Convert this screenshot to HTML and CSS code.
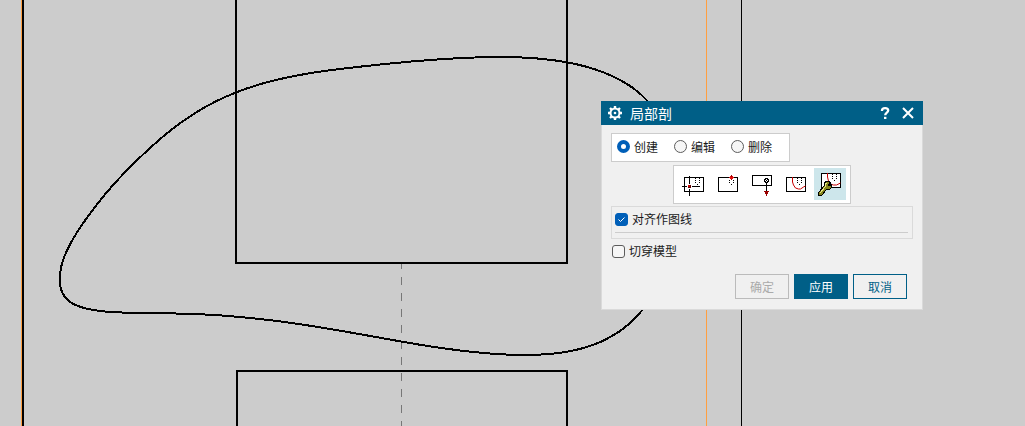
FILE: index.html
```html
<!DOCTYPE html>
<html lang="zh-CN">
<head>
<meta charset="utf-8">
<title>局部剖</title>
<link rel="stylesheet" href="styles.css">
</head>

<body>
<svg class="canvas" aria-hidden="true">
    <rect class="orange" x="21" y="0" width="1" height="100%"/>
    <rect x="22" y="0" width="2" height="100%"/>
    <rect class="orange" x="706" y="0" width="1" height="100%"/>
    <rect x="741" y="0" width="1" height="100%"/>
    <line class="axis" x1="401.5" y1="264" x2="401.5" y2="100%"/>
    <path class="edge" d="M236 0V263H567V0"/>
    <path class="edge" d="M237 2000V371H567V2000"/>
    <path class="spline" d="M60 281C60 275 60 269 62 264C66 248 77 231 90.5 213C108.5 188 131 165 155 143.5C179 122 206 104 236 92.5C268 79.5 302 73.5 340 69C394 62.5 446 57 500 57C523 57 546 58.5 567 62.3C592 67 615 75 633 88C638.5 92 643 96 647.5 101C668 122 676 160 676 190C676 235 663 285 642 310.5C633 321 623 330 612 336C589 350 560 355 525 355C487 355 443 349 401 341.5C345 331.5 290 321 236 316.7C188 312 156 314 122 312.5C105 312 84 310 72.5 303.5C64 298.5 60 292 60 281Z"/>
</svg>

<form class="dialog">
    <div class="title_bar">
        <svg class="gear" viewBox="0 0 14 14" aria-hidden="true">
            <circle cx="7" cy="7" r="4.5" fill="none" stroke="#fff" stroke-width="2"/>
            <path d="M7 0v2M7 12v2M0 7h2M12 7h2M2 2l1.5 1.5M10.5 10.5L12 12M2 12l1.5-1.5M10.5 3.5L12 2" stroke="#fff" stroke-width="2.4"/>
            <circle cx="7" cy="7" r="1.3" fill="#fff"/>
        </svg>
        <h1>局部剖</h1>
        <button type="button" class="title_btn" aria-label="帮助">
            <svg viewBox="0 0 14 14"><path d="M4 5V4.5C4 1.2 10.2 1.2 10.2 4.5C10.2 6.6 7.2 6.6 7.2 9.2" fill="none" stroke="#fff" stroke-width="2.3"/><path d="M6 10.8h2.4v2.2H6z" fill="#fff"/></svg>
        </button>
        <button type="button" class="title_btn" aria-label="关闭">
            <svg viewBox="0 0 14 14"><path d="M2 2l10 10M12 2L2 12" stroke="#fff" stroke-width="2"/></svg>
        </button>
    </div>

    <div class="content">
        <div class="modes">
            <label><input type="radio" name="mode" checked>创建</label>
            <label><input type="radio" name="mode">编辑</label>
            <label><input type="radio" name="mode">删除</label>
        </div>

        <div class="tools">
            <button type="button" aria-label="选择视图">
                <svg viewBox="0 0 32 32">
                    <path class="line" d="M6.5 9.5h19v14h-19zM11.5 8v8M11.5 21v7M4 18.5h5M14 18.5h8"/>
                    <path d="M17 10h1v1h-1zM17 12h1v1h-1zM17 14h1v1h-1zM21 10h1v1h-1zM21 12h1v1h-1zM21 14h1v1h-1zM19 16h1v1h-1z"/>
                    <path fill="#5c0000" d="M10 17h3v3h-3z"/>
                    <path fill="#c00000" d="M10 17h2v2h-2z"/>
                </svg>
            </button>
            <button type="button" aria-label="指出基点">
                <svg viewBox="0 0 32 32">
                    <path class="line" d="M6.5 9.5h19v14h-19z"/>
                    <path d="M17 12h1v1h-1zM17 14h1v1h-1zM21 12h1v1h-1zM21 14h1v1h-1zM19 16h1v1h-1z"/>
                    <path fill="#e01010" d="M18 8h3v1h1v1h-1v1h-3v-1h-1v-1h1z"/>
                    <path fill="#900" d="M19 7h1v2h-1zM19 11h1v1h-1z"/>
                </svg>
            </button>
            <button type="button" aria-label="指出拉伸矢量">
                <svg viewBox="0 0 32 32">
                    <path class="line" d="M6.5 7.5h19v10h-19zM20.5 13v10"/>
                    <path fill="#fff" stroke="#000" d="M19.5 10.5h2v1h1v2h-1v1h-2v-1h-1v-2h1z"/>
                    <path d="M20 12h1v1h-1z"/>
                    <path fill="#900" d="M18 23h5v1h-1v2h-1v2h-1v-2h-1v-2h-1z"/>
                </svg>
            </button>
            <button type="button" aria-label="选择曲线">
                <svg viewBox="0 0 32 32">
                    <path class="line" d="M6.5 9.5h19v14h-19z"/>
                    <path class="cut" d="M12.5 9v5l1 3 2 3 3 1h2l3-2 2-1"/>
                    <path d="M17 10h1v1h-1zM17 12h1v1h-1zM17 14h1v1h-1zM21 10h1v1h-1zM21 12h1v1h-1zM21 14h1v1h-1zM19 16h1v1h-1z"/>
                </svg>
            </button>
            <button type="button" class="on" aria-label="修改边界曲线">
                <svg viewBox="0 0 32 32">
                    <path fill="#fff" stroke="#000" d="M7.5 5.5h19v14h-19z"/>
                    <path class="cut" d="M13.5 5v4l1 4 2 3 3 1h3l4-2"/>
                    <path d="M18 6h1v1h-1zM18 8h1v1h-1zM18 10h1v1h-1zM22 6h1v1h-1zM22 8h1v1h-1zM22 10h1v1h-1zM20 12h1v1h-1z"/>
                    <path fill="#85851c" stroke="#000" d="M10.500 14.500l2-1h3l1 2-2 1v1h1l2-1v3l-2 2h-3l-5 6h-3v-3l6-7z"/>
                    <path fill="none" stroke="#e6e680" d="M6 25l5-6v-3l2-1"/>
                </svg>
            </button>
        </div>

        <div class="align_box">
            <label><input type="checkbox" checked>对齐作图线</label>
            <hr>
        </div>
        <label class="cut_model"><input type="checkbox">切穿模型</label>

        <div class="actions">
            <button type="button" disabled>确定</button>
            <button type="button" class="primary">应用</button>
            <button type="button">取消</button>
        </div>
    </div>
</form>
</body>
</html>
```
FILE: styles.css
```css
*{margin:0; padding:0; box-sizing:border-box;}
body{min-height:100vh;background:#ccc;overflow:hidden;font:12px/16px "Noto Sans CJK SC",sans-serif;color:#1a1a1a;}
button,input{font:inherit;color:inherit;}

/* drawing area */
.canvas{display:block;width:100%;height:100vh;shape-rendering:crispEdges;}
.canvas .orange{fill:#ff9f40;}
.canvas .axis{stroke:#777;stroke-width:1;stroke-dasharray:8 8;stroke-dashoffset:3;}
.canvas .edge{fill:none;stroke:#000;stroke-width:2;}
.canvas .spline{fill:none;stroke:#000;stroke-width:2;}

/* dialog window */
.dialog{position:absolute;left:601px;top:101px;width:322px;background:#f0f0f0;}
.title_bar{display:flex;align-items:center;height:24px;padding:0 8px 0 7px;background:#005f87;color:#fff;}
.title_bar .gear{width:14px;height:14px;margin-right:8px;}
.title_bar h1{flex:1;font-size:14px;line-height:24px;font-weight:normal;}
.title_btn{width:14px;height:14px;margin-left:9px;border:0;background:none;}
.title_btn svg{display:block;}
.content{display:flex;flex-direction:column;align-items:flex-start;padding:8px 9px 10px;border:1px solid #dadada;border-top:0;}

label{display:flex;align-items:center;gap:4px;}
input{appearance:none;flex:none;width:13px;height:13px;border:1px solid #5c5c5c;background:#f6f6f6;}
input[type=radio]{border-radius:50%;}
input[type=radio]:checked{border:4px solid #005fb8;background:#fff;}
input[type=checkbox]{border-radius:3px;}
input[type=checkbox]:checked{border-color:#005fb8;background:#005fb8 url("data:image/svg+xml,%3Csvg xmlns='http://www.w3.org/2000/svg' viewBox='0 0 11 11'%3E%3Cpath d='M2.5 5.5l2 2 4-4' fill='none' stroke='%23fff'/%3E%3C/svg%3E");}

.modes{display:flex;gap:16px;height:29px;padding:0 17px 2px 5px;border:1px solid #ccc;background:#fff;}
.tools{display:flex;align-self:center;gap:2px;margin-top:3px;padding:2px 4px 3px;border:1px solid #ccc;background:#fff;}
.tools button{width:32px;height:32px;border:0;background:none;}
.tools .on{background:#cde6eb;}
.tools svg{display:block;width:32px;height:32px;shape-rendering:crispEdges;}
.tools .line{fill:none;stroke:#000;}
.tools .cut{fill:none;stroke:#c80000;shape-rendering:auto;}
.align_box{align-self:stretch;margin-top:2px;padding:4px 4px 5px 3px;border:1px solid #dadada;}
.align_box hr{margin-top:5px;border:0;border-top:1px solid #ccc;}
.cut_model{margin-top:4px;padding-left:1px;}

.actions{display:flex;align-self:flex-end;gap:5px;margin-top:15px;padding-right:6px;}
.actions button{width:54px;height:25px;border:1px solid #005f87;background:#f0f0f0;color:#005f87;line-height:23px;}
.actions button:disabled{border-color:#bbb;color:#aaa;}
.actions .primary{background:#005f87;color:#fff;}
```
